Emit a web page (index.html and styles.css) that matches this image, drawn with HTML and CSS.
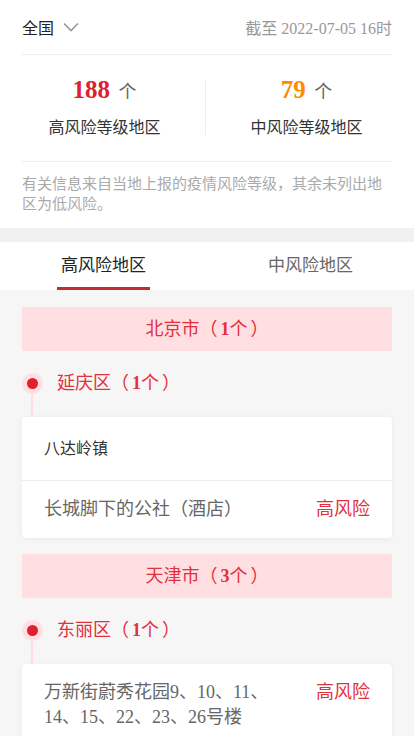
FILE: index.html
```html
<!DOCTYPE html>
<html lang="zh-CN">
<head>
    <meta charset="UTF-8">
    <meta name="viewport" content="width=device-width, initial-scale=1.0">
    <title>风险等级查询</title>
    <link rel="stylesheet" href="styles.css">
</head>
<body>
    <div class="summary">
        <div class="topbar">
            <div class="area">
                全国
                <svg class="chevron" width="16" height="10" viewBox="0 0 16 10">
                    <polyline points="1,1.5 8,8.5 15,1.5" fill="none" stroke="#999" stroke-width="1.6"/>
                </svg>
            </div>
            <div class="date">截至 2022-07-05 16时</div>
        </div>

        <div class="stats">
            <div class="stat">
                <div class="count"><b class="high">188</b> 个</div>
                <div class="label">高风险等级地区</div>
            </div>
            <div class="divider"></div>
            <div class="stat">
                <div class="count"><b class="mid">79</b> 个</div>
                <div class="label">中风险等级地区</div>
            </div>
        </div>

        <div class="note">有关信息来自当地上报的疫情风险等级，其余未列出地区为低风险。</div>
    </div>

    <div class="tabs">
        <div class="tab active"><span>高风险地区</span></div>
        <div class="tab"><span>中风险地区</span></div>
    </div>

    <div class="list">
        <div class="province">北京市（<span class="num"><b>1</b>个</span>）</div>
        <div class="district">
            <div class="district-head"><i class="dot"></i>延庆区（<span class="num"><b>1</b>个</span>）</div>
            <div class="stem"></div>
        </div>
        <div class="card">
            <div class="town">八达岭镇</div>
            <div class="place">
                <div class="place-name">长城脚下的公社（酒店）</div>
                <div class="level">高风险</div>
            </div>
        </div>

        <div class="province">天津市（<span class="num"><b>3</b>个</span>）</div>
        <div class="district">
            <div class="district-head"><i class="dot"></i>东丽区（<span class="num"><b>1</b>个</span>）</div>
            <div class="stem"></div>
        </div>
        <div class="card">
            <div class="place">
                <div class="place-name">万新街蔚秀花园9、10、11、14、15、22、23、26号楼</div>
                <div class="level">高风险</div>
            </div>
        </div>
    </div>
</body>
</html>
```

FILE: styles.css
```css
body {
    margin: 0;
    font-family: "Liberation Serif", "Noto Sans CJK SC", serif;
    background-color: #f6f6f6;
    color: #333;
}

.summary {
    background-color: #fff;
    border-bottom: 14px solid #f1f1f1;
}

.topbar {
    display: flex;
    align-items: center;
    justify-content: space-between;
    height: 54px;
    margin: 0 22px;
    border-bottom: 1px solid #eee;
    font-size: 16px;
}

.area {
    display: flex;
    align-items: center;
    gap: 9px;
    color: #222;
}

.date {
    color: #999;
}

.stats {
    display: grid;
    grid-template-columns: 1fr 1px 1fr;
    align-items: center;
    padding: 20px 7px 22px 4px;
}

.stat {
    text-align: center;
}

.count {
    height: 30px;
    line-height: 30px;
    font-size: 18px;
    color: #666;
}

.count b {
    font-size: 25px;
    margin-right: 4px;
}

.count .high {
    color: #e0202e;
}

.count .mid {
    color: #ff8a00;
}

.label {
    margin-top: 12px;
    line-height: 22px;
    font-size: 16px;
    color: #333;
}

.divider {
    height: 55px;
    background-color: #eee;
}

.note {
    margin: 0 22px;
    padding: 12px 0 14px;
    border-top: 1px solid #eee;
    font-size: 15px;
    line-height: 20px;
    color: #aaa;
}

.tabs {
    display: flex;
    background-color: #fff;
}

.tab {
    flex: 1;
    display: flex;
    justify-content: center;
    padding-top: 12px;
    font-size: 17px;
    color: #666;
}

.tab span {
    width: 93px;
    line-height: 24px;
    padding-bottom: 12px;
    text-align: center;
}

.tab.active {
    color: #222;
}

.tab.active span {
    padding-bottom: 9px;
    border-bottom: 3px solid #c12c37;
}

.list {
    padding: 17px 22px 0;
}

.province {
    height: 44px;
    line-height: 44px;
    text-align: center;
    background-color: #ffdfe2;
    color: #e2303c;
    font-size: 18px;
}

.num {
    padding: 0 3px;
}

.card + .province {
    margin-top: 16px;
}

.district {
    padding-top: 22px;
}

.district-head {
    display: flex;
    align-items: center;
    height: 20px;
    line-height: 20px;
    font-size: 18px;
    color: #e2303c;
}

.dot {
    box-sizing: border-box;
    width: 21px;
    height: 21px;
    margin-right: 14px;
    border-radius: 50%;
    border: 5px solid #ffdfe2;
    background-color: #e0202e;
}

.stem {
    width: 2px;
    height: 24px;
    margin-left: 9px;
    background-color: #ffdde0;
}

.card {
    background-color: #fff;
    border-radius: 4px;
    box-shadow: 0 1px 6px rgba(0, 0, 0, 0.05);
}

.town {
    padding: 21px 22px 20px;
    line-height: 22px;
    font-size: 16px;
    color: #333;
    border-bottom: 1px solid #eee;
}

.place {
    display: flex;
    align-items: flex-start;
    gap: 24px;
    padding: 16px 22px;
    font-size: 18px;
    line-height: 25px;
}

.place-name {
    flex: 1;
    color: #666;
}

.level {
    color: #e2303c;
}
```
